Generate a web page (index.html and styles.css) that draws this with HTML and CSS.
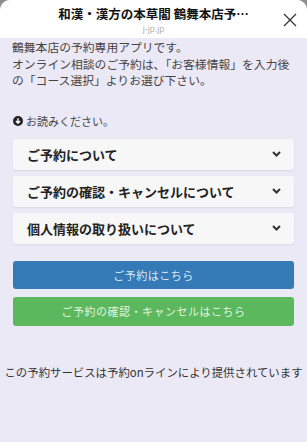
FILE: index.html
```html
<!DOCTYPE html>
<html lang="ja">
  <head>
    <meta charset="UTF-8" />
    <meta name="viewport" content="width=device-width, initial-scale=1.0" />
    <title>和漢・漢方の本草閣 鶴舞本店予約</title>
    <link rel="stylesheet" href="styles.css">
  </head>
  <body>
    <div class="sheet">
      <header class="head">
        <div class="head-text">
          <h1>和漢・漢方の本草閣 鶴舞本店予…</h1>
          <span class="domain">j-jp.jp</span>
        </div>
        <button class="close" aria-label="閉じる">
          <svg width="14" height="14" viewBox="0 0 14 14">
            <path d="M1 1L13 13M13 1L1 13" stroke="#333" stroke-width="1.3" fill="none" />
          </svg>
        </button>
      </header>

      <main class="content">
        <p class="intro">鶴舞本店の予約専用アプリです。<br />オンライン相談のご予約は、「お客様情報」を入力後の「コース選択」よりお選び下さい。</p>

        <p class="notice">
          <svg width="10" height="10" viewBox="0 0 10 10">
            <circle cx="5" cy="5" r="5" fill="#222" />
            <path d="M5 2.3V7M2.9 5L5 7.2L7.1 5" stroke="#fff" stroke-width="1.4" fill="none" />
          </svg>
          お読みください。
        </p>

        <div class="faq">
          <div class="faq-item">
            <span>ご予約について</span>
            <svg class="chev" width="9" height="6" viewBox="0 0 9 6"><path d="M1 1L4.5 4.5L8 1" stroke="#333" stroke-width="2" fill="none" /></svg>
          </div>
          <div class="faq-item">
            <span>ご予約の確認・キャンセルについて</span>
            <svg class="chev" width="9" height="6" viewBox="0 0 9 6"><path d="M1 1L4.5 4.5L8 1" stroke="#333" stroke-width="2" fill="none" /></svg>
          </div>
          <div class="faq-item">
            <span>個人情報の取り扱いについて</span>
            <svg class="chev" width="9" height="6" viewBox="0 0 9 6"><path d="M1 1L4.5 4.5L8 1" stroke="#333" stroke-width="2" fill="none" /></svg>
          </div>
        </div>

        <div class="actions">
          <button class="btn btn-blue">ご予約はこちら</button>
          <button class="btn btn-green">ご予約の確認・キャンセルはこちら</button>
        </div>

        <p class="footer-note">この予約サービスは予約onラインにより提供されています</p>
      </main>
    </div>
  </body>
</html>
```
FILE: styles.css
```css
html,
body {
  margin: 0;
  padding: 0;
  height: 100%;
}

body {
  background: #8e8e93;
  font-family: "Noto Sans CJK JP", "Noto Sans", sans-serif;
  color: #333;
  overflow: hidden;
}

button {
  margin: 0;
  padding: 0;
  border: none;
  background: none;
  font-family: inherit;
}

p {
  margin: 0;
}

.sheet {
  height: 100%;
  display: flex;
  flex-direction: column;
  background: #ebe9f5;
  border-radius: 10px 10px 0 0;
  overflow: hidden;
}

.head {
  height: 38px;
  flex-shrink: 0;
  background: #fff;
  display: flex;
  align-items: center;
  position: relative;
}

.head-text {
  flex: 1;
  display: flex;
  flex-direction: column;
  align-items: center;
  padding-top: 1px;
}

.head h1 {
  margin: 0;
  font-size: 12.5px;
  line-height: 18px;
  font-weight: 700;
  color: #111;
}

.domain {
  font-size: 9px;
  line-height: 12px;
  color: #b4b4b4;
  font-family: "Liberation Sans", sans-serif;
}

.close {
  position: absolute;
  right: 10px;
  top: 13px;
  width: 14px;
  height: 14px;
  display: flex;
}

.content {
  padding: 1px 13px 0 12px;
}

.intro {
  font-size: 11.8px;
  line-height: 16.5px;
  color: #444;
}

.notice {
  margin-top: 25px;
  display: flex;
  align-items: center;
  gap: 3px;
  font-size: 11px;
  line-height: 14px;
  color: #444;
  padding-left: 1px;
}

.faq {
  margin-top: 11px;
  display: flex;
  flex-direction: column;
  gap: 6px;
  padding-left: 1px;
}

.faq-item {
  height: 31px;
  padding: 0 13px 0 14px;
  display: flex;
  align-items: center;
  justify-content: space-between;
  background: #f7f7f7;
  border-radius: 3px;
  box-shadow: 0 1px 2px rgba(0, 0, 0, 0.08);
  font-size: 13px;
  font-weight: 700;
  color: #222;
}

.actions {
  margin-top: 17px;
  display: flex;
  flex-direction: column;
  gap: 8px;
  padding-left: 1px;
}

.btn {
  height: 28px;
  border-radius: 3px;
  color: rgba(255, 255, 255, 0.85);
  font-size: 11px;
  letter-spacing: 0.5px;
}

.btn-blue {
  background: #337ab7;
}

.btn-green {
  height: 29px;
  background: #5cb85c;
}

.footer-note {
  margin: 38px -13px 0 -12px;
  text-align: center;
  white-space: nowrap;
  font-size: 11.4px;
  line-height: 16px;
  color: #333;
}
```
